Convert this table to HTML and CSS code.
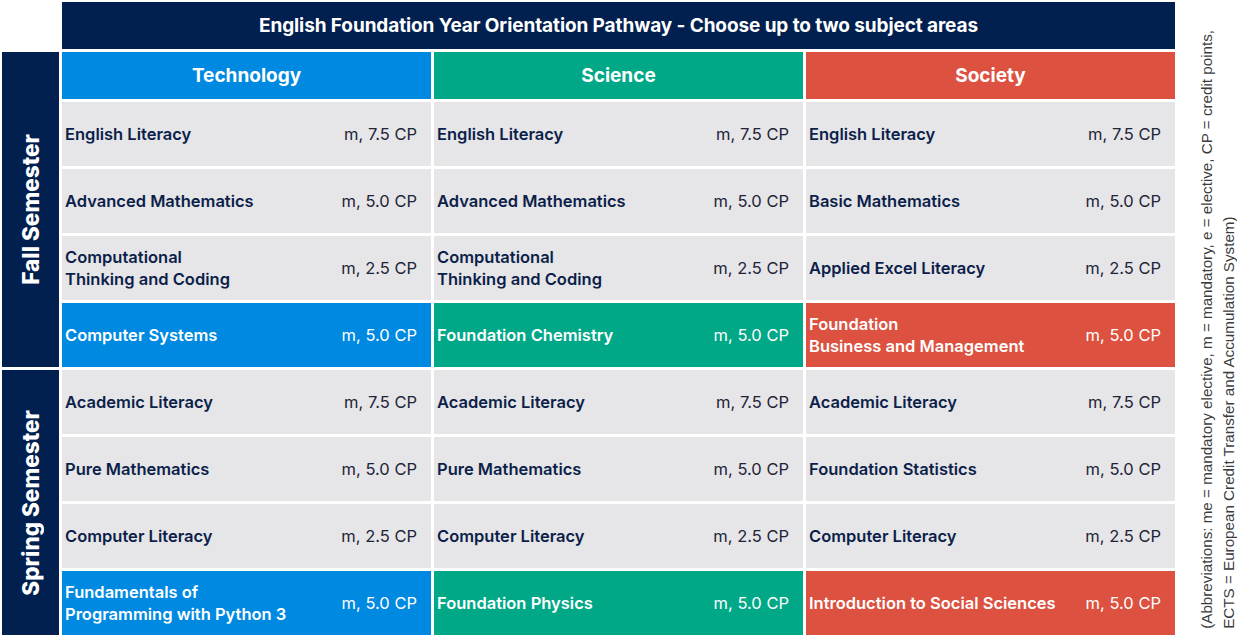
FILE: index.html
```html
<!DOCTYPE html>
<html lang="en">
<head>
<meta charset="utf-8">
<title>English Foundation Year Orientation Pathway</title>
<link rel="stylesheet" href="styles.css">
</head>
<body>
<div class="page">
  <div class="grid">
    <div class="title">English Foundation Year Orientation Pathway - Choose up to two subject areas</div>

    <div class="sem sem-fall"><span>Fall Semester</span></div>
    <div class="head tech">Technology</div>
    <div class="head sci">Science</div>
    <div class="head soc">Society</div>

    <div class="cell"><span class="name">English Literacy</span><span class="cp">m, 7.5 CP</span></div>
    <div class="cell"><span class="name">English Literacy</span><span class="cp">m, 7.5 CP</span></div>
    <div class="cell"><span class="name">English Literacy</span><span class="cp">m, 7.5 CP</span></div>

    <div class="cell"><span class="name">Advanced Mathematics</span><span class="cp">m, 5.0 CP</span></div>
    <div class="cell"><span class="name">Advanced Mathematics</span><span class="cp">m, 5.0 CP</span></div>
    <div class="cell"><span class="name">Basic Mathematics</span><span class="cp">m, 5.0 CP</span></div>

    <div class="cell"><span class="name">Computational<br>Thinking and Coding</span><span class="cp">m, 2.5 CP</span></div>
    <div class="cell"><span class="name">Computational<br>Thinking and Coding</span><span class="cp">m, 2.5 CP</span></div>
    <div class="cell"><span class="name">Applied Excel Literacy</span><span class="cp">m, 2.5 CP</span></div>

    <div class="cell tech"><span class="name">Computer Systems</span><span class="cp">m, 5.0 CP</span></div>
    <div class="cell sci"><span class="name">Foundation Chemistry</span><span class="cp">m, 5.0 CP</span></div>
    <div class="cell soc"><span class="name">Foundation<br>Business and Management</span><span class="cp">m, 5.0 CP</span></div>

    <div class="sem sem-spring"><span>Spring Semester</span></div>

    <div class="cell"><span class="name">Academic Literacy</span><span class="cp">m, 7.5 CP</span></div>
    <div class="cell"><span class="name">Academic Literacy</span><span class="cp">m, 7.5 CP</span></div>
    <div class="cell"><span class="name">Academic Literacy</span><span class="cp">m, 7.5 CP</span></div>

    <div class="cell"><span class="name">Pure Mathematics</span><span class="cp">m, 5.0 CP</span></div>
    <div class="cell"><span class="name">Pure Mathematics</span><span class="cp">m, 5.0 CP</span></div>
    <div class="cell"><span class="name">Foundation Statistics</span><span class="cp">m, 5.0 CP</span></div>

    <div class="cell"><span class="name">Computer Literacy</span><span class="cp">m, 2.5 CP</span></div>
    <div class="cell"><span class="name">Computer Literacy</span><span class="cp">m, 2.5 CP</span></div>
    <div class="cell"><span class="name">Computer Literacy</span><span class="cp">m, 2.5 CP</span></div>

    <div class="cell tech"><span class="name">Fundamentals of<br>Programming with Python 3</span><span class="cp">m, 5.0 CP</span></div>
    <div class="cell sci"><span class="name">Foundation Physics</span><span class="cp">m, 5.0 CP</span></div>
    <div class="cell soc"><span class="name">Introduction to Social Sciences</span><span class="cp">m, 5.0 CP</span></div>
  </div>
  <div class="note">
    <p>(Abbreviations: me = mandatory elective, m = mandatory, e = elective, CP = credit points,<br>ECTS = European Credit Transfer and Accumulation System)</p>
  </div>
</div>
</body>
</html>
```

FILE: styles.css
```css
html, body {
  margin: 0;
  padding: 0;
  background: #ffffff;
}

body {
  font-family: Inter, "Liberation Sans", Arial, sans-serif;
  color: #0c1f4a;
}

.page {
  display: flex;
  padding: 2px 0 0 2px;
}

.grid {
  display: grid;
  grid-template-columns: 57px 369px 369px 369px;
  grid-template-rows: 47px 47px repeat(8, 64px);
  gap: 3px;
}

.title {
  grid-column: 2 / 5;
  background: #01204f;
  color: #ffffff;
  font-weight: 700;
  font-size: 19px;
  display: flex;
  align-items: center;
  justify-content: center;
  letter-spacing: -0.1px;
}

.sem {
  grid-column: 1;
  background: #01204f;
  color: #ffffff;
  display: flex;
  align-items: center;
  justify-content: center;
}

.sem span {
  writing-mode: vertical-rl;
  transform: rotate(180deg);
  font-weight: 800;
  font-size: 22.5px;
  white-space: nowrap;
}

.sem-fall {
  grid-row: 2 / 7;
}

.sem-spring {
  grid-row: 7 / 11;
}

.head {
  color: #ffffff;
  font-weight: 700;
  font-size: 19px;
  display: flex;
  align-items: center;
  justify-content: center;
}

.cell {
  display: flex;
  align-items: center;
  justify-content: space-between;
  padding: 0 14px 0 3px;
  background: #e6e5e7;
  font-size: 16.5px;
  line-height: 22px;
}

.cell .name {
  font-weight: 600;
  color: #0c1f4a;
}

.cell .cp {
  font-weight: 400;
  color: #1d2438;
  white-space: nowrap;
}

.tech, .cell.tech { background: #0089e1; }
.sci, .cell.sci { background: #00a887; }
.soc, .cell.soc { background: #dc513f; }

.cell.tech .name, .cell.sci .name, .cell.soc .name,
.cell.tech .cp, .cell.sci .cp, .cell.soc .cp {
  color: #ffffff;
}

.note {
  display: flex;
  align-items: flex-end;
  padding-left: 21px;
  padding-bottom: 6px;
}

.note p {
  margin: 0;
  writing-mode: vertical-rl;
  transform: rotate(180deg);
  font-family: "Liberation Sans", Arial, sans-serif;
  font-size: 15.2px;
  line-height: 22px;
  color: #3c3c3c;
  white-space: nowrap;
}
```
